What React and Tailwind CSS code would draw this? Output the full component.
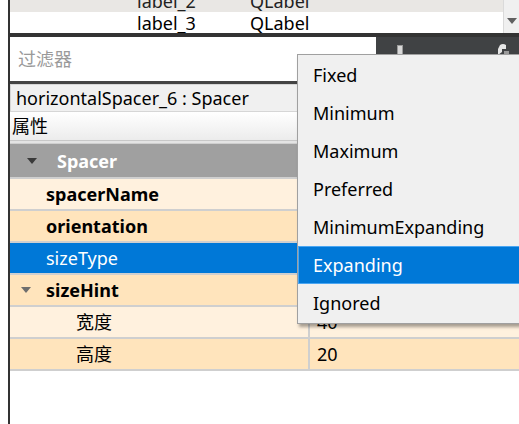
const font = { fontFamily: '"Noto Sans", "Noto Sans CJK SC", sans-serif' };

function Arrow({ className }) {
  return (
    <svg width="10" height="6" viewBox="0 0 10 6" className={className}>
      <path d="M0 0 L10 0 L5 6 Z" fill="currentColor" />
    </svg>
  );
}

function PropRow({ bg, label, value, bold, indent, arrow, selected }) {
  return (
    <div className="flex h-[32px] border-b-2 border-[#cfcfcf]">
      <div className={`relative w-[298px] flex items-center ${bg} ${indent}`}>
        {arrow && <Arrow className="absolute left-[11px] top-[12px] text-[#6e6e6e]" />}
        <span className={`${bold ? 'font-bold' : ''} ${selected ? 'text-white' : 'text-black'}`}>{label}</span>
      </div>
      <div className={`flex-1 flex items-center pl-[7px] border-l-2 border-[#cfcfcf] ${bg}`}>
        <span className="text-black">{value}</span>
      </div>
    </div>
  );
}

export default function App() {
  const items = ['Fixed', 'Minimum', 'Maximum', 'Preferred', 'MinimumExpanding', 'Expanding', 'Ignored'];

  return (
    <div className="relative w-[519px] h-[424px] overflow-hidden bg-white text-[18px] leading-none" style={font}>
      <div className="ml-[8px] h-full border-l-2 border-[#333333] flex flex-col">
        {/* top object list */}
        <div className="flex h-[33px]">
          <div className="flex-1 flex flex-col">
            <div className="h-[12px] bg-[#e9e7e4] overflow-hidden relative text-[#222]">
              <span className="absolute left-[127px] -top-[8px]">label_2</span>
              <span className="absolute left-[240px] -top-[8px]">QLabel</span>
            </div>
            <div className="h-[21px] bg-white flex items-center">
              <span className="w-[127px]" />
              <span className="w-[113px]">label_3</span>
              <span>QLabel</span>
            </div>
          </div>
          <div className="w-[16px] bg-[#f0f0f0] border-l border-[#dadada] flex flex-col justify-end items-center pb-[9px]">
            <Arrow className="text-[#606060]" />
          </div>
        </div>

        {/* filter + toolbar */}
        <div className="h-[4px] bg-[#333333]" />
        <div className="flex h-[44px] bg-[#333333]">
          <div className="w-[366px] bg-white flex items-center pl-[8px] text-[#9a9a9a]">过滤器</div>
          <div className="flex-1 h-[18px] bg-[#404244] relative">
            <div className="absolute left-[21px] top-[8px] w-[6px] h-[10px] bg-[#d8d8d8] border border-[#9a9a9a]" />
            <svg className="absolute left-[120px] top-[6px]" width="14" height="12" viewBox="0 0 14 12">
              <path d="M4 2 Q7 0 10 2 L10 6 L6 6 L6 9 L2 12 L2 6 Z" fill="#e6e6e6" />
              <path d="M8 8 L13 8 L13 12 L8 12 Z" fill="#9a9a9a" />
            </svg>
          </div>
        </div>
        <div className="h-[3px] bg-[#444444]" />

        {/* selected object name */}
        <div className="h-[28px] bg-[#f0f0f0] border border-[#d6d6d6] flex items-center pl-[5px] text-black">
          horizontalSpacer_6 : Spacer
        </div>

        {/* header */}
        <div className="h-[29px] bg-gradient-to-b from-white to-[#ececec] flex items-center pl-[2px] text-black border-b border-[#c8c8c8]">
          属性
        </div>
        <div className="h-[3px] bg-[#e4e4e4] border-b border-[#cfcfcf]" />

        {/* property tree */}
        <div className="flex h-[35px] bg-[#a0a0a0] border-b-2 border-[#cfcfcf] items-center relative">
          <Arrow className="absolute left-[17px] top-[14px] text-[#3a3a3a]" />
          <span className="pl-[47px] text-white font-bold">Spacer</span>
        </div>
        <PropRow bg="bg-[#fff1de]" label="spacerName" bold indent="pl-[36px]" value="" />
        <PropRow bg="bg-[#ffe4bc]" label="orientation" bold indent="pl-[36px]" value="" />
        <PropRow bg="bg-[#0078d7]" label="sizeType" indent="pl-[36px]" value="" selected />
        <PropRow bg="bg-[#ffe4bc]" label="sizeHint" bold indent="pl-[36px]" value="" arrow />
        <PropRow bg="bg-[#fff1de]" label="宽度" indent="pl-[66px]" value="40" />
        <PropRow bg="bg-[#ffe4bc]" label="高度" indent="pl-[66px]" value="20" />
        <div className="flex-1 bg-white" />
      </div>

      {/* dropdown menu */}
      <div className="absolute left-[297px] top-[54px] w-[240px] h-[270px] bg-[#f0f0f0] border border-[#a0a0a0] pt-[1px] shadow-[2px_3px_3px_rgba(0,0,0,0.35)]">
        {items.map((it) =>
          it === 'Expanding' ? (
            <div key={it} className="h-[38px] flex items-center pl-[14px] bg-[#0078d7] border border-[#4aa6f2] text-white">
              {it}
            </div>
          ) : (
            <div key={it} className="h-[38px] flex items-center pl-[15px] text-black">
              {it}
            </div>
          )
        )}
      </div>
    </div>
  );
}
